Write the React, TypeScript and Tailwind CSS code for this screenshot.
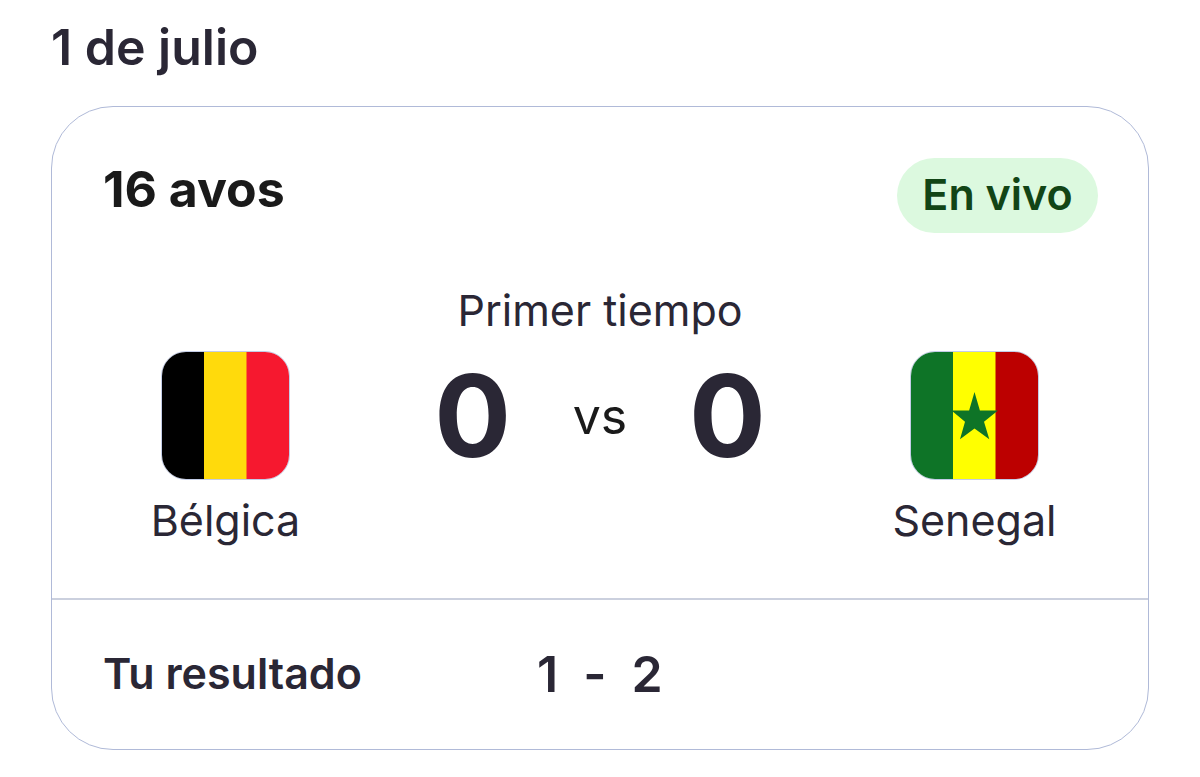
import React from "react";

function Belgium() {
  return (
    <svg viewBox="0 0 127 127" className="h-full w-full">
      <rect width="42.5" height="127" fill="#000" />
      <rect x="42" width="43" height="127" fill="#ffda0c" />
      <rect x="84.5" width="42.5" height="127" fill="#f6182f" />
    </svg>
  );
}

function Senegal() {
  return (
    <svg viewBox="0 0 127 127" className="h-full w-full">
      <rect width="42.5" height="127" fill="#0e7427" />
      <rect x="42" width="43" height="127" fill="#ffff00" />
      <rect x="84.5" width="42.5" height="127" fill="#bc0000" />
      <polygon fill="#0e7427" points="63.5,40 68.9,58.6 87,58.6 73,69.8 78.3,87.2 63.5,76.5 49,87.2 54,69.8 40.5,58.6 58.1,58.6" />
    </svg>
  );
}

function Team({ name, children }: { name: string; children: React.ReactNode }) {
  return (
    <div className="flex w-[243px] flex-col items-center pt-[64px]">
      <div className="h-[129px] w-[129px] overflow-hidden rounded-[25px] border border-[#c3cce6]">{children}</div>
      <div className="mt-[12px] whitespace-nowrap text-[43px] leading-[56px]">{name}</div>
    </div>
  );
}

export default function App() {
  return (
    <main className="h-[777px] w-[1200px] overflow-hidden bg-white px-[51px] pt-[20px] font-['Inter',sans-serif] text-[#2a2735]">
      <h1 className="h-[86px] text-[50px] font-semibold leading-[55px]">1 de julio</h1>
      <section className="flex h-[644px] w-[1098px] flex-col rounded-[62px] border border-[#b0bad8]">
        <div className="flex items-start justify-between pl-[51px] pr-[50px] pt-[51px]">
          <h2 className="pt-[3px] text-[50px] font-bold leading-[56px] text-[#1a1a1a]">16 avos</h2>
          <span className="flex h-[75px] w-[201px] items-center justify-center rounded-full bg-[#dcf9df] pb-[2px] text-[43px] font-semibold text-[#124516]">En vivo</span>
        </div>
        <div className="mt-[54px] flex h-[311px] justify-between px-[52px]">
          <Team name="Bélgica"><Belgium /></Team>
          <div className="flex flex-col items-center">
            <div className="text-[43px] leading-[46px]">Primer tiempo</div>
            <div className="mt-[18px] flex h-[130px] items-center">
              <span className="text-[114px] font-bold leading-[130px]">0</span>
              <span className="w-[178px] pb-[1px] text-center text-[50px] leading-[60px] text-[#1a1a1a]">vs</span>
              <span className="text-[114px] font-bold leading-[130px]">0</span>
            </div>
          </div>
          <Team name="Senegal"><Senegal /></Team>
        </div>
        <div className="flex flex-1 items-center border-t-2 border-[#cbd0de] px-[51px] font-semibold">
          <div className="w-[434px] pb-[3px] text-[43px]">Tu resultado</div>
          <div className="flex gap-[25px] text-[50px]"><span>1</span><span>-</span><span>2</span></div>
        </div>
      </section>
    </main>
  );
}
